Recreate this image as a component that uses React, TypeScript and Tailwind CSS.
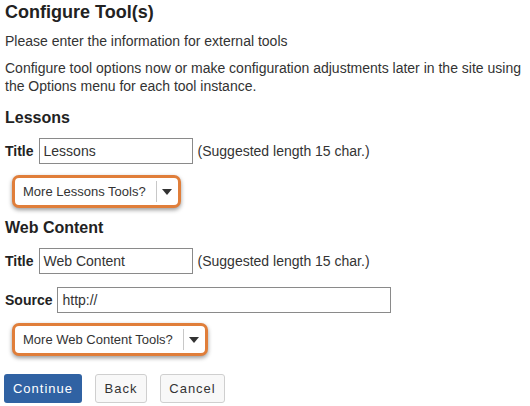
import React from "react";

function Caret() {
  return (
    <svg width="10" height="6" viewBox="0 0 10 6" className="block">
      <path d="M0 0 L10 0 L5 6 Z" fill="#333333" />
    </svg>
  );
}

function MoreTools({ label }: { label: string }) {
  return (
    <div className="ml-[7px] inline-flex h-[33px] items-stretch rounded-[7px] border-[3px] border-[#e07e3a] bg-white shadow-[0_2px_4px_rgba(0,0,0,0.4)]">
      <span className="flex items-center pl-[8px] pr-[10px] text-[13px] text-[#333]">
        {label}
      </span>
      <span className="my-[3px] w-px bg-[#c8c8c8]" />
      <span className="flex w-[21px] items-center justify-center">
        <Caret />
      </span>
    </div>
  );
}

function Field({
  label,
  value,
  width,
  hint,
}: {
  label: string;
  value: string;
  width: string;
  hint?: boolean;
}) {
  return (
    <div className="flex h-[26px] items-center">
      <span className="mr-[5px] text-[14px] font-bold text-[#222]">{label}</span>
      <div
        className={`flex h-[26px] items-center border border-[#8a8a8a] bg-white pl-[4px] text-[14px] text-[#333] ${width}`}
      >
        {value}
      </div>
      {hint && (
        <span className="ml-[5px] text-[14px] text-[#333]">
          (Suggested length 15 char.)
        </span>
      )}
    </div>
  );
}

export default function App() {
  return (
    <div
      className="h-[406px] w-[530px] overflow-hidden bg-white pl-[5px] text-[#333]"
      style={{ fontFamily: '"Liberation Sans", Arial, sans-serif' }}
    >
      <h1 className="mt-[1px] text-[18px] font-bold leading-[22px] text-[#222]">
        Configure Tool(s)
      </h1>
      <p className="mt-[9px] text-[14px] leading-[18px]">
        Please enter the information for external tools
      </p>
      <p className="mt-[9px] text-[14px] leading-[18px]">
        Configure tool options now or make configuration adjustments later in the site using
        the Options menu for each tool instance.
      </p>

      <h2 className="mt-[13px] text-[16px] font-bold leading-[20px] text-[#222]">Lessons</h2>
      <div className="mt-[10px]">
        <Field label="Title" value="Lessons" width="w-[154px]" hint />
      </div>
      <div className="mt-[11px]">
        <MoreTools label="More Lessons Tools?" />
      </div>

      <h2 className="mt-[10px] text-[16px] font-bold leading-[20px] text-[#222]">
        Web Content
      </h2>
      <div className="mt-[10px]">
        <Field label="Title" value="Web Content" width="w-[154px]" hint />
      </div>
      <div className="mt-[13px]">
        <Field label="Source" value="http://" width="w-[334px]" />
      </div>
      <div className="mt-[10px]">
        <MoreTools label="More Web Content Tools?" />
      </div>

      <div className="-ml-px mt-[18px] flex gap-[13px]">
        <button className="h-[29px] w-[78px] rounded-[3px] bg-[#3062a3] text-[13px] tracking-[1px] text-white">
          Continue
        </button>
        <button className="h-[29px] w-[52px] rounded-[3px] border border-[#cfcfcf] bg-[#f8f8f8] text-[13px] tracking-[1px] text-[#333]">
          Back
        </button>
        <button className="h-[29px] w-[65px] rounded-[3px] border border-[#cfcfcf] bg-[#f8f8f8] text-[13px] tracking-[1px] text-[#333]">
          Cancel
        </button>
      </div>
    </div>
  );
}
